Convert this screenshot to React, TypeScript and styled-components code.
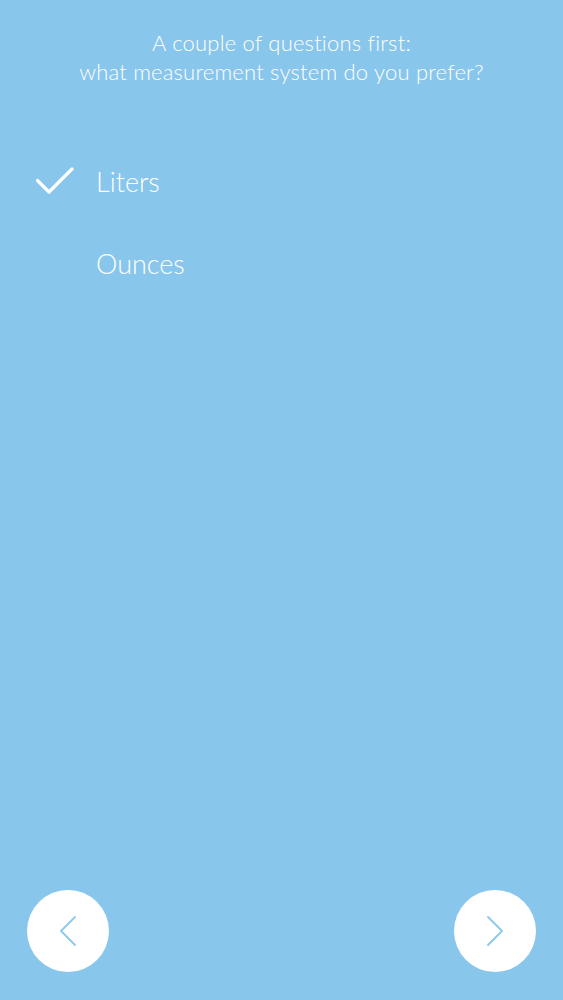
import React, { useState } from "react";
import styled, { createGlobalStyle } from "styled-components";

const Global = createGlobalStyle`
  html, body { margin: 0; padding: 0; background: #89c6ec; }
  * { box-sizing: border-box; }
`;

const Screen = styled.div`
  height: 1000px;
  background: #89c6ec;
  display: flex;
  flex-direction: column;
  font-family: Lato, "Open Sans", sans-serif;
  color: #ffffff;
`;

const Title = styled.h1`
  margin: 0;
  padding-top: 28px;
  font-weight: 300;
  font-size: 22px;
  line-height: 29px;
  text-align: center;
  letter-spacing: 0.2px;
`;

const Options = styled.div`
  display: flex;
  flex-direction: column;
  gap: 30px;
  margin-top: 69px;
`;

const Option = styled.button`
  display: flex;
  align-items: center;
  height: 52px;
  padding: 0 0 0 36px;
  background: none;
  border: 0;
  color: #fff;
  font-family: inherit;
  font-size: 27px;
  font-weight: 300;
  cursor: pointer;
  text-align: left;
`;

const CheckSlot = styled.span`
  width: 60px;
  display: flex;
  align-items: center;
`;

const Spacer = styled.div`
  flex: 1;
`;

const Nav = styled.div`
  display: flex;
  justify-content: space-between;
  padding: 0 27px 28px 27px;
`;

const Circle = styled.button`
  width: 82px;
  height: 82px;
  border-radius: 50%;
  border: 0;
  background: #ffffff;
  display: flex;
  align-items: center;
  justify-content: center;
  cursor: pointer;
  padding: 0;
`;

const Check = () => (
  <svg width="38" height="28" viewBox="0 0 38 28" fill="none">
    <path d="M1.5 13.5 L13 25 L36 2" stroke="#fff" strokeWidth="3.2" strokeLinecap="round" strokeLinejoin="round" />
  </svg>
);

const Chevron = ({ dir }: { dir: "left" | "right" }) => (
  <svg width="18" height="32" viewBox="0 0 18 32" fill="none">
    <path
      d={dir === "left" ? "M16 2 L2 16 L16 30" : "M2 2 L16 16 L2 30"}
      stroke="#8cc8ed"
      strokeWidth="1.8"
      strokeLinecap="round"
      strokeLinejoin="round"
    />
  </svg>
);

export default function App() {
  const [sel, setSel] = useState("Liters");
  return (
    <Screen>
      <Global />
      <Title>
        A couple of questions first:
        <br />
        what measurement system do you prefer?
      </Title>
      <Options>
        {["Liters", "Ounces"].map((o) => (
          <Option key={o} onClick={() => setSel(o)}>
            <CheckSlot>{sel === o && <Check />}</CheckSlot>
            {o}
          </Option>
        ))}
      </Options>
      <Spacer />
      <Nav>
        <Circle aria-label="Back">
          <Chevron dir="left" />
        </Circle>
        <Circle aria-label="Next">
          <Chevron dir="right" />
        </Circle>
      </Nav>
    </Screen>
  );
}
